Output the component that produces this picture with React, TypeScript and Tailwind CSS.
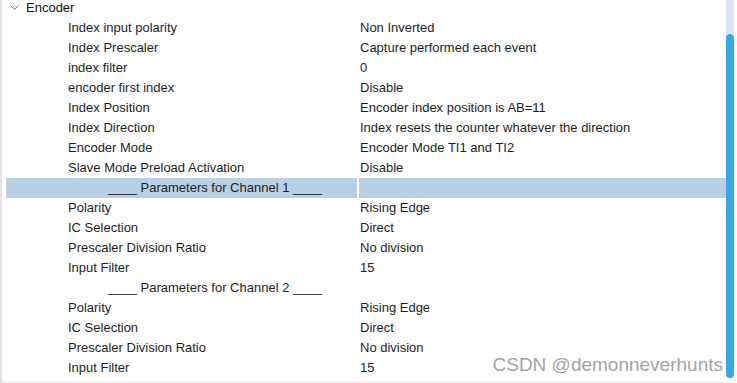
const rows: { label: string; value: string; kind?: "head" | "sel" }[] = [
  { label: "Index input polarity", value: "Non Inverted" },
  { label: "Index Prescaler", value: "Capture performed each event" },
  { label: "index filter", value: "0" },
  { label: "encoder first index", value: "Disable" },
  { label: "Index Position", value: "Encoder index position is AB=11" },
  { label: "Index Direction", value: "Index resets the counter whatever the direction" },
  { label: "Encoder Mode", value: "Encoder Mode TI1 and TI2" },
  { label: "Slave Mode Preload Activation", value: "Disable" },
  { label: "____ Parameters for Channel 1 ____", value: "", kind: "sel" },
  { label: "Polarity", value: "Rising Edge" },
  { label: "IC Selection", value: "Direct" },
  { label: "Prescaler Division Ratio", value: "No division" },
  { label: "Input Filter", value: "15" },
  { label: "____ Parameters for Channel 2 ____", value: "", kind: "head" },
  { label: "Polarity", value: "Rising Edge" },
  { label: "IC Selection", value: "Direct" },
  { label: "Prescaler Division Ratio", value: "No division" },
  { label: "Input Filter", value: "15" },
];

export default function App() {
  return (
    <div className="w-[737px] h-[383px] overflow-hidden bg-white flex border-l-2 border-[#dfe4ea] text-[13px] text-[#1e1e1e] font-['Liberation_Sans',Arial,sans-serif] relative">
      <div className="flex-1 flex flex-col border-b border-[#e6e6e6]">
        <div className="h-[18px] shrink-0 flex items-center pl-[8px] pb-[2px] gap-[7px]">
          <svg width="9" height="6" viewBox="0 0 9 6" className="text-[#7a7a7a]">
            <path d="M0.5 0.5 L4.5 4.5 L8.5 0.5" fill="none" stroke="currentColor" strokeWidth="1" />
          </svg>
          <span className="text-[#111]">Encoder</span>
        </div>
        {rows.map((r, i) => (
          <div
            key={i}
            className={`h-[20px] shrink-0 ml-[4px] flex items-center ${r.kind === "sel" ? "bg-[#b9cfe4]" : ""}`}
          >
            <div className={`w-[351px] h-full flex items-center ${r.kind ? "pl-[102px]" : "pl-[62px]"}`}>
              {r.label}
            </div>
            <div className={`w-[2px] h-full ${r.kind === "sel" ? "bg-white" : ""}`} />
            <div className="flex-1 h-full flex items-center pl-[1px]">{r.value}</div>
          </div>
        ))}
      </div>
      <div className="w-[8px] mr-[3px] flex flex-col">
        <div className="h-[34px] bg-[#dae6f2]" />
        <div className="h-[344px] bg-[#3aa8de] rounded-[4px]" />
      </div>
      <div className="absolute right-[14px] bottom-[4px] text-[19px] text-[#a3a3a3]">CSDN @demonneverhunts</div>
    </div>
  );
}
